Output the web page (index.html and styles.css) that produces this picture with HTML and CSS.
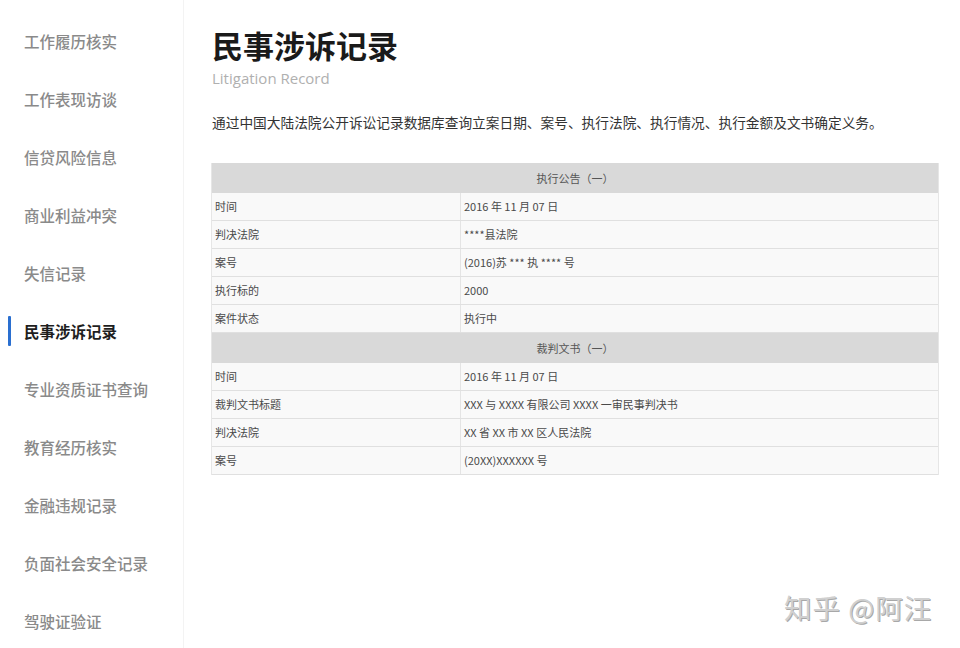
FILE: index.html
```html
<!DOCTYPE html>
<html lang="zh-CN">
<head>
<meta charset="utf-8">
<title>民事涉诉记录</title>
<link rel="stylesheet" href="styles.css">
</head>
<body>
<div class="page">
  <nav class="sidebar">
    <div class="nav-item">工作履历核实</div>
    <div class="nav-item">工作表现访谈</div>
    <div class="nav-item">信贷风险信息</div>
    <div class="nav-item">商业利益冲突</div>
    <div class="nav-item">失信记录</div>
    <div class="nav-item active">民事涉诉记录</div>
    <div class="nav-item">专业资质证书查询</div>
    <div class="nav-item">教育经历核实</div>
    <div class="nav-item">金融违规记录</div>
    <div class="nav-item">负面社会安全记录</div>
    <div class="nav-item">驾驶证验证</div>
  </nav>
  <main class="main">
    <h1 class="title">民事涉诉记录</h1>
    <div class="subtitle">Litigation Record</div>
    <p class="desc">通过中国大陆法院公开诉讼记录数据库查询立案日期、案号、执行法院、执行情况、执行金额及文书确定义务。</p>
    <div class="table">
      <div class="thead">执行公告（一）</div>
      <div class="row"><div class="k">时间</div><div class="v">2016 年 11 月 07 日</div></div>
      <div class="row"><div class="k">判决法院</div><div class="v">****县法院</div></div>
      <div class="row"><div class="k">案号</div><div class="v">(2016)苏 *** 执 **** 号</div></div>
      <div class="row"><div class="k">执行标的</div><div class="v">2000</div></div>
      <div class="row"><div class="k">案件状态</div><div class="v">执行中</div></div>
      <div class="thead">裁判文书（一）</div>
      <div class="row"><div class="k">时间</div><div class="v">2016 年 11 月 07 日</div></div>
      <div class="row"><div class="k">裁判文书标题</div><div class="v">XXX 与 XXXX 有限公司 XXXX 一审民事判决书</div></div>
      <div class="row"><div class="k">判决法院</div><div class="v">XX 省 XX 市 XX 区人民法院</div></div>
      <div class="row"><div class="k">案号</div><div class="v">(20XX)XXXXXX 号</div></div>
    </div>
  </main>
  <div class="watermark">知乎 @阿汪</div>
</div>
</body>
</html>
```
FILE: styles.css
```css
html, body {
  margin: 0;
  padding: 0;
  background: #ffffff;
}
body {
  font-family: "Noto Sans CJK SC", "Noto Sans", sans-serif;
  color: #333;
}
.page {
  position: relative;
  display: flex;
  width: 960px;
  height: 648px;
  overflow: hidden;
}
.sidebar {
  width: 183px;
  flex: none;
  border-right: 1px solid #f3f3f3;
  padding-top: 12px;
  box-sizing: content-box;
}
.nav-item {
  position: relative;
  height: 58px;
  line-height: 58px;
  padding-left: 24px;
  font-size: 15.5px;
  font-weight: 500;
  color: #8a8a8a;
  white-space: nowrap;
}
.nav-item.active {
  color: #1e1e1e;
  font-weight: 700;
}
.nav-item.active::before {
  content: "";
  position: absolute;
  left: 8px;
  top: 14px;
  width: 3px;
  height: 30px;
  background: #2a6fd0;
  border-radius: 1px;
}
.main {
  flex: 1;
  padding: 24px 0 0 27px;
}
.title {
  margin: 0 0 0 1px;
  font-size: 31px;
  line-height: 42px;
  font-weight: 700;
  color: #1a1a1a;
}
.subtitle {
  margin: 1px 0 0 1px;
  font-family: "Open Sans", "Noto Sans", sans-serif;
  font-size: 15px;
  line-height: 22px;
  color: #b0b0b0;
}
.desc {
  margin: 23px 0 0 1px;
  font-size: 13.7px;
  line-height: 20px;
  color: #333;
}
.table {
  margin-top: 31px;
  width: 728px;
  border-left: 1px solid #e6e6e6;
  border-right: 1px solid #e6e6e6;
  box-sizing: border-box;
  font-size: 11px;
  color: #4a4a4a;
}
.thead {
  height: 30px;
  line-height: 30px;
  background: #d9d9d9;
  text-align: center;
  color: #555;
}
.row {
  display: grid;
  grid-template-columns: 249px 1fr;
  height: 28px;
  box-sizing: border-box;
  border-bottom: 1px solid #e0e0e0;
  background: #f9f9f9;
}
.row .k {
  padding-left: 3px;
  line-height: 27px;
  border-right: 1px solid #e4e4e4;
}
.row .v {
  padding-left: 3px;
  line-height: 27px;
}
.watermark {
  position: absolute;
  left: 784px;
  top: 588px;
  font-size: 27.5px;
  line-height: 38px;
  color: #d0d0d0;
  text-shadow: 1px 1px 0 #a8a8a8;
  letter-spacing: 1px;
}
```
